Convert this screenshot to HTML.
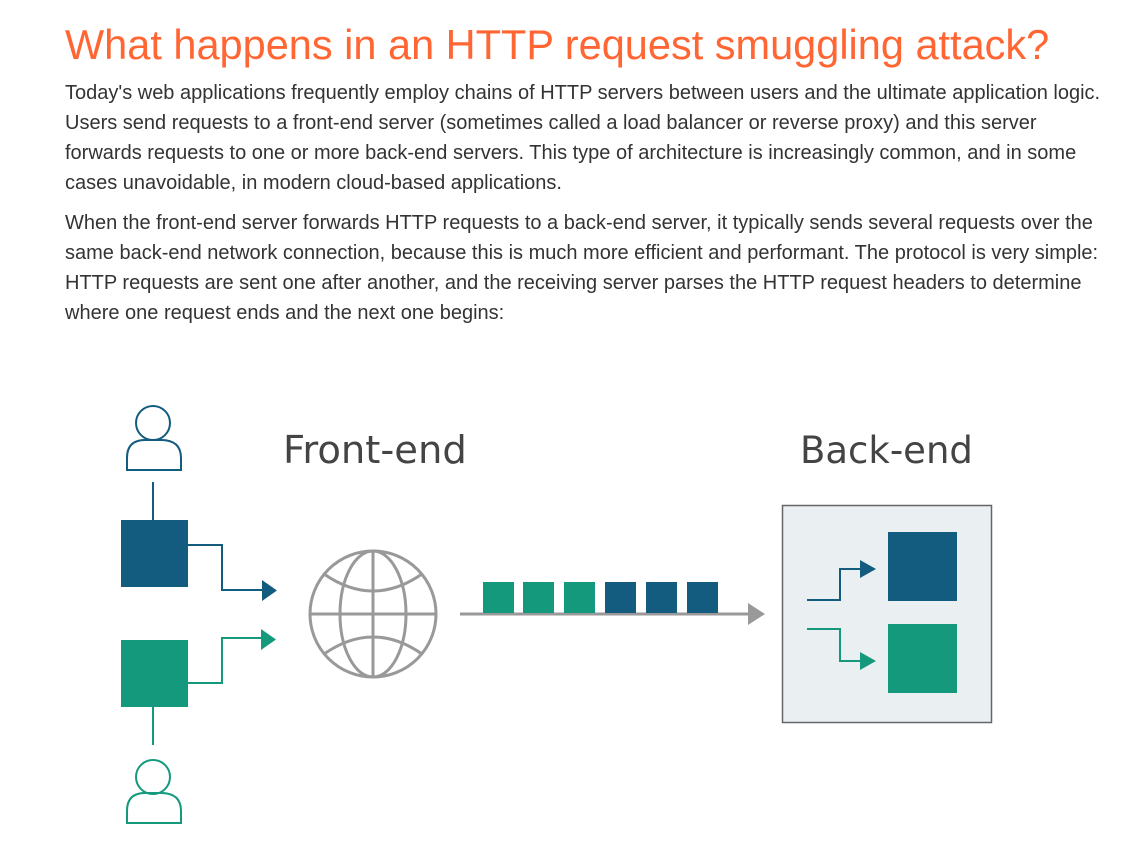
<!DOCTYPE html>
<html><head><meta charset="utf-8"><style>
body{margin:0;background:#fff;width:1127px;height:848px;position:relative;overflow:hidden;font-family:"Liberation Sans",Arial,sans-serif;}
h1{position:absolute;left:65px;top:19px;margin:0;font-weight:normal;font-size:41.5px;color:#ff6633;line-height:52px;white-space:nowrap;}
.p{position:absolute;left:65px;margin:0;font-size:20px;line-height:30px;color:#333;width:1045px;}
svg{position:absolute;left:0;top:0;}
</style></head><body>
<h1>What happens in an HTTP request smuggling attack?</h1>
<p class="p" style="top:78px">Today's web applications frequently employ chains of HTTP servers between users and the ultimate application logic. Users send requests to a front-end server (sometimes called a load balancer or reverse proxy) and this server forwards requests to one or more back-end servers. This type of architecture is increasingly common, and in some cases unavoidable, in modern cloud-based applications.</p>
<p class="p" style="top:208px">When the front-end server forwards HTTP requests to a back-end server, it typically sends several requests over the same back-end network connection, because this is much more efficient and performant. The protocol is very simple: HTTP requests are sent one after another, and the receiving server parses the HTTP request headers to determine where one request ends and the next one begins:</p>
<svg width="1127" height="848" viewBox="0 0 1127 848">
<rect x="782.5" y="505.5" width="209" height="217" fill="#eaeff2" stroke="#666" stroke-width="1.5"/>
<g fill="none" stroke-width="2">
<g stroke="#135c80">
<circle cx="153" cy="423" r="17"/>
<path d="M127 470V458Q127 440 145 440H161Q181 440 181 458V470Z"/>
<path d="M153 482V520M188 545H222V590H262"/>
<path d="M807 600H840V569H860"/>
</g>
<g stroke="#14997c">
<circle cx="153" cy="777" r="17"/>
<path d="M127 823V811Q127 793 145 793H161Q181 793 181 811V823Z"/>
<path d="M153 707V745M188 683H222V638H261"/>
<path d="M807 629H840V661H860"/>
</g>
<g stroke="#999" stroke-width="3">
<circle cx="373" cy="614" r="63"/>
<ellipse cx="373" cy="614" rx="33" ry="63"/>
<path d="M373 551V677M310 614H436M324 574Q373 608 422 574M324 654Q373 620 422 654"/>
<path d="M460 614H750"/>
</g>
</g>
<path d="M262 580L277 590.5L262 601Z" fill="#135c80"/>
<path d="M261 629L276 639.5L261 650Z" fill="#14997c"/>
<path d="M860 560L876 569L860 578Z" fill="#135c80"/>
<path d="M860 652L876 661L860 670Z" fill="#14997c"/>
<path d="M748 603L765 614L748 625Z" fill="#999"/>
<rect x="121" y="520" width="67" height="67" fill="#135c80"/>
<rect x="121" y="640" width="67" height="67" fill="#14997c"/>
<rect x="483" y="582" width="31" height="31" fill="#14997c"/>
<rect x="523" y="582" width="31" height="31" fill="#14997c"/>
<rect x="564" y="582" width="31" height="31" fill="#14997c"/>
<rect x="605" y="582" width="31" height="31" fill="#135c80"/>
<rect x="646" y="582" width="31" height="31" fill="#135c80"/>
<rect x="687" y="582" width="31" height="31" fill="#135c80"/>
<rect x="888" y="532" width="69" height="69" fill="#135c80"/>
<rect x="888" y="624" width="69" height="69" fill="#14997c"/>
<text x="283" y="463" font-family="DejaVu Sans,sans-serif" font-size="38.5" fill="#444">Front-end</text>
<text x="800" y="463" font-family="DejaVu Sans,sans-serif" font-size="37" fill="#444">Back-end</text>
</svg>
</body></html>
